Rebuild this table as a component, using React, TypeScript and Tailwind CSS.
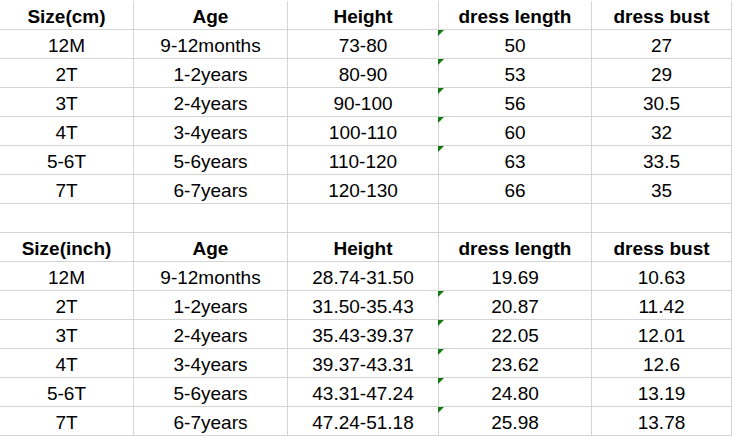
const header = (first: string) => [first, "Age", "Height", "dress length", "dress bust"];

const cmRows = [
  ["12M", "9-12months", "73-80", "50", "27"],
  ["2T", "1-2years", "80-90", "53", "29"],
  ["3T", "2-4years", "90-100", "56", "30.5"],
  ["4T", "3-4years", "100-110", "60", "32"],
  ["5-6T", "5-6years", "110-120", "63", "33.5"],
  ["7T", "6-7years", "120-130", "66", "35"],
];

const inchRows = [
  ["12M", "9-12months", "28.74-31.50", "19.69", "10.63"],
  ["2T", "1-2years", "31.50-35.43", "20.87", "11.42"],
  ["3T", "2-4years", "35.43-39.37", "22.05", "12.01"],
  ["4T", "3-4years", "39.37-43.31", "23.62", "12.6"],
  ["5-6T", "5-6years", "43.31-47.24", "24.80", "13.19"],
  ["7T", "6-7years", "47.24-51.18", "25.98", "13.78"],
];

// rows whose "dress length" cell shows Excel's green error marker
const flagged = new Set(["cm-0", "cm-1", "cm-2", "cm-3", "cm-4", "in-1", "in-2", "in-3", "in-4", "in-5"]);

function Cell({ text, bold, flag }: { text: string; bold?: boolean; flag?: boolean }) {
  return (
    <div
      className={`relative h-[29px] border-r border-b border-[#d4d4d4] flex items-center justify-center pt-[2px] whitespace-nowrap ${
        bold ? "font-bold" : ""
      }`}
    >
      {flag && (
        <span className="absolute top-0 left-[-1px] w-[6px] h-[6px] bg-[#137a13] [clip-path:polygon(0_0,100%_0,0_100%)]" />
      )}
      {text}
    </div>
  );
}

export default function App() {
  return (
    <div
      className="w-[733px] h-[436px] bg-white text-black text-[19px] leading-none pt-px overflow-hidden"
      style={{ fontFamily: '"Liberation Sans", Arial, sans-serif' }}
    >
      <div className="grid grid-cols-[134px_154px_151px_153px_140px]">
        {header("Size(cm)").map((h) => (
          <Cell key={"hc" + h} text={h} bold />
        ))}
        {cmRows.map((row, i) =>
          row.map((v, j) => <Cell key={`cm${i}-${j}`} text={v} flag={j === 3 && flagged.has(`cm-${i}`)} />)
        )}
        {[0, 1, 2, 3, 4].map((j) => (
          <Cell key={"gap" + j} text="" />
        ))}
        {header("Size(inch)").map((h) => (
          <Cell key={"hi" + h} text={h} bold />
        ))}
        {inchRows.map((row, i) =>
          row.map((v, j) => <Cell key={`in${i}-${j}`} text={v} flag={j === 3 && flagged.has(`in-${i}`)} />)
        )}
      </div>
    </div>
  );
}
